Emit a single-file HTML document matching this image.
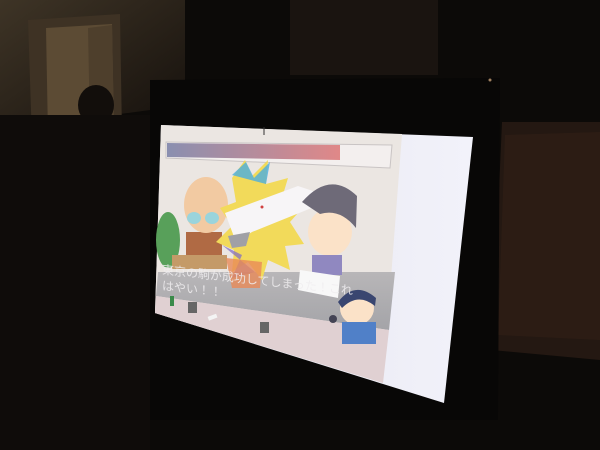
<!DOCTYPE html>
<html><head><meta charset="utf-8"><style>html,body{margin:0;padding:0;background:#0d0a08;overflow:hidden}svg{display:block}</style></head><body>
<svg width="600" height="450" viewBox="0 0 600 450" xmlns="http://www.w3.org/2000/svg">
<defs>
<linearGradient id="wall" x1="0" y1="0" x2="1" y2="1"><stop offset="0" stop-color="#3e3426"/><stop offset="1" stop-color="#15100c"/></linearGradient>
<linearGradient id="bar" x1="0" x2="1"><stop offset="0" stop-color="#8a8fb0"/><stop offset="1" stop-color="#e08888"/></linearGradient>
<linearGradient id="white" x1="0" x2="1"><stop offset="0" stop-color="#e4e4ee"/><stop offset="1" stop-color="#f2f2fa"/></linearGradient>
<linearGradient id="band" x1="0" y1="0" x2="0" y2="1"><stop offset="0" stop-color="#b8b6b8"/><stop offset="1" stop-color="#a4a4a8"/></linearGradient>
</defs>
<rect width="600" height="450" fill="#0c0a08"/>
<polygon points="0,0 185,0 185,95 150,110 0,130" fill="url(#wall)"/>
<polygon points="28,20 120,14 122,135 32,140" fill="#3e3224"/>
<polygon points="46,28 112,24 114,130 48,135" fill="#5c4b34"/>
<polygon points="88,28 112,25 114,130 90,132" fill="#4e3f2c"/>
<ellipse cx="96" cy="105" rx="18" ry="20" fill="#120e0b"/>
<rect x="0" y="115" width="150" height="335" fill="#0f0c0a"/>
<rect x="290" y="0" width="148" height="75" fill="#1a1410"/>
<polygon points="502,122 600,122 600,360 492,350" fill="#241812"/>
<polygon points="505,135 600,132 600,340 498,335" fill="#2e1e15" opacity="0.8"/>
<polygon points="150,80 500,78 498,420 150,420" fill="#080706"/>
<!-- screen -->
<polygon points="161,125 473,137 444,403 155,313" fill="url(#white)"/>
<!-- game area -->
<polygon points="161,125 402,134 383,383 155,313" fill="#ebe6e2"/>
<polygon points="158,272 395,272 389,330 156,296" fill="url(#band)"/>
<polygon points="156,296 389,330 383,383 155,313" fill="#e0d0d2"/>
<polygon points="166,142 392,145 390,168 166,158" fill="#f3efee" stroke="#c9c4c4" stroke-width="1"/>
<polygon points="167,143 340,145 340,160 167,157" fill="url(#bar)"/>
<line x1="264" y1="127" x2="264" y2="135" stroke="#333" stroke-width="1"/>
<!-- plant -->
<ellipse cx="168" cy="240" rx="12" ry="28" fill="#58a05a"/>
<!-- bald man -->
<rect x="186" y="232" width="36" height="34" fill="#b06a44"/>
<ellipse cx="206" cy="205" rx="22" ry="28" fill="#f2caa2"/>
<ellipse cx="194" cy="218" rx="7" ry="6" fill="#9ad4dc"/>
<ellipse cx="212" cy="218" rx="7" ry="6" fill="#9ad4dc"/>
<rect x="172" y="255" width="55" height="14" fill="#c49a68"/>
<!-- explosion -->
<polygon points="232,178 245,160 252,176 268,160 266,184 288,178 282,198 305,205 290,222 304,244 285,246 290,270 268,260 262,280 248,262 232,272 234,250 216,242 232,226 220,208 236,202" fill="#f2da5a"/>
<polygon points="232,175 246,162 254,178 270,162 266,184" fill="#4aaee0" opacity="0.8"/>
<polygon points="222,245 242,255 232,278 255,272" fill="#7c68c8" opacity="0.7"/>
<polygon points="226,258 262,262 260,288 232,288" fill="#e88a58" opacity="0.8"/>
<!-- arm -->
<polygon points="225,213 298,186 316,192 314,207 252,232 236,242" fill="#f7f5f7"/>
<polygon points="228,236 250,232 246,246 232,248" fill="#a0a0a6"/>
<circle cx="262" cy="207" r="1.5" fill="#d04040"/>
<!-- boy -->
<ellipse cx="330" cy="232" rx="22" ry="24" fill="#fbe2c8"/>
<path d="M302 202 Q330 170 357 196 L356 228 Q340 208 320 214 Z" fill="#6e6a78"/>
<rect x="312" y="255" width="30" height="20" fill="#9088c0"/>
<polygon points="300,270 340,276 338,298 298,290" fill="#f8f8f8"/>
<!-- reporter -->
<ellipse cx="357" cy="308" rx="17" ry="17" fill="#fbe2c8"/>
<path d="M338 302 Q355 280 376 298 L375 306 Q358 292 342 308 Z" fill="#3a4670"/>
<rect x="342" y="322" width="34" height="22" fill="#5080c8"/>
<ellipse cx="333" cy="319" rx="4" ry="4" fill="#445"/>
<!-- icons -->
<rect x="170" y="296" width="4" height="10" fill="#3a8a4a"/>
<rect x="188" y="302" width="9" height="11" fill="#666"/>
<rect x="260" y="322" width="9" height="11" fill="#666"/>
<rect x="208" y="315" width="9" height="4" fill="#f4f4f4" transform="rotate(-20 213 317)"/>
<!-- text -->
<g transform="matrix(1,0.11,0,1,0,0)" font-family="Liberation Sans, 'Noto Sans CJK JP', sans-serif" fill="#f0eef0" opacity="0.85" font-size="12">
<text x="162" y="256">東京の駒が成功してしまった！これ</text>
<text x="162" y="272">はやい！！</text>
</g>
<circle cx="490" cy="80" r="1.5" fill="#a08060"/>
</svg>
</body></html>
